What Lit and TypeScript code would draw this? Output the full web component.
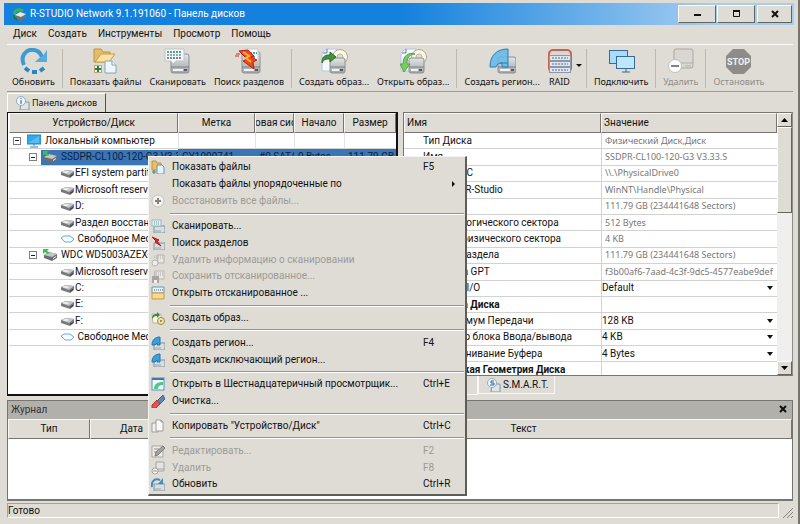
import { LitElement, html, css, svg, nothing } from "lit";
import { customElement } from "lit/decorators.js";
import { classMap } from "lit/directives/class-map.js";

const drive = (x: number, y: number, w: number, h: number) => svg`
  <rect x=${x} y=${y} width=${w} height=${h} rx="2" fill="url(#metal)" stroke="#8d9194"/>
  <path d="M${x} ${y + h - 6}h${w}" stroke="#7d8184"/>
  <path d="M${x + 2} ${y + h - 3}h${w - 8}" stroke="#f2f2f2" stroke-width="2"/>
  <path d="M${x + w - 5} ${y + h - 3}h3" stroke="#55595c" stroke-width="2"/>`;

const metal = svg`<defs><linearGradient id="metal" x1="0" y1="0" x2="0" y2="1">
  <stop offset="0" stop-color="#e3e5e6"/><stop offset="1" stop-color="#a2a6a9"/></linearGradient></defs>`;

const dots = (x: number, y: number) => svg`
  <path d="M${x} ${y}h15" stroke="#4aa69a" stroke-width="2" stroke-dasharray="2 1"/>
  <path d="M${x} ${y + 3}h15" stroke="#44525c" stroke-width="1" stroke-dasharray="2 1"/>
  <path d="M${x} ${y + 6}h15" stroke="#7b8791" stroke-width="2" stroke-dasharray="2 1"/>`;

const page = svg`<path d="M1 5l4-4h11v22h-15z" fill="#f6f9ff" stroke="#b5c4e4"/><path d="M2 5h4v-4" fill="#e5ecfb" stroke="#5e7fbe"/>`;
const disc = svg`<circle cx="19" cy="9" r="7.500" fill="#faf6e8" stroke="#b5a988"/><circle cx="19" cy="9" r="3" fill="#e0ddd8" stroke="#c2b795"/>`;

const big: Record<string, unknown> = {
  refresh: svg`<path d="M4 17C-1 6 9-1 17 3c3 1 4 4 5 6" fill="none" stroke="#3d9bd2" stroke-width="4"/>
    <path d="M27 2v12H15l4-4 3-1z" fill="#57acdd"/>
    <path d="M5 20l4 3M12 24h5M20 23l4-3" stroke="#2289c6" stroke-width="4"/>`,
  files: svg`<path d="M2 1h7l2 3h7v3l-6 7H2z" fill="#e5bd68" stroke="#c0953f"/><path d="M3 14l6-8h14l-6 8z" fill="#fbe2a4" stroke="#c79d4b"/>
    <path d="M13 13h7l4 4v8H13z" fill="#eef7fd" stroke="#7fa7c2"/><path d="M20 13v4h4" fill="#fff" stroke="#7fa7c2"/>
    <rect x="2.500" y="17.500" width="7" height="7" fill="#f4f4ea" stroke="#b4a77e"/><path d="M6 18v6M3 21h6" stroke="#2e7d42" stroke-width="2"/>`,
  scan: svg`${metal}${drive(7, 6, 18, 19)}<path d="M1 1h19v12h-8l-3 3-2-3H1z" fill="#f3f7f8" stroke="#b9c4c9"/>${dots(3, 4)}`,
  search: svg`${metal}${drive(7, 4, 18, 21)}<path d="M8 1h15v12H10z" fill="#fff" stroke="#c3cace"/><path d="M15 5h7M15 9h6" stroke="#4aa69a" stroke-width="2" stroke-dasharray="2 1"/>
    <path d="M4 3l9-1 6 6-3 1 6 3-4 2 1 7-11-8 4-2z" fill="#f04a1c" stroke="#b21c1c"/><path d="M8 4l6 4-3 2 5 4" fill="none" stroke="#ffb52e" stroke-width="2"/><path d="M1 6h4M0 8h4" stroke="#cf2d24"/>`,
  create: svg`${metal}${page}${disc}${drive(9, 10, 15, 15)}<path d="M1 15c0-7 3-8 8-8V4l6 5-6 5v-3c-4 0-6 0-8 4z" fill="#43913c" stroke="#2b6d27"/>`,
  open: svg`${metal}${page}${disc}${drive(9, 10, 15, 15)}<path d="M15 6C9 6 7 10 7 16h3l-6 8-4-8h3C3 8 8 4 15 6z" fill="#7bcb62" stroke="#4ca93f"/>`,
  region: svg`${metal}${drive(9, 9, 18, 16)}<path d="M1 19C1 7 8 1 19 1v18h-6v-4c-3 0-5 1-6 4z" fill="#62b9e9" fill-opacity=".85" stroke="#277fb7"/><path d="M11 15h8" stroke="#277fb7"/>`,
  raid: svg`<rect x="3" y="2" width="22" height="22" rx="4" fill="#d4d8dd" stroke="#c3644c" stroke-width="2"/>
    <g fill="#dfe5ec" stroke="#8b98aa"><rect x="3.500" y="7.500" width="21" height="5"/><rect x="3.500" y="13.500" width="21" height="5"/><rect x="3.500" y="19.500" width="21" height="5"/></g>
    <path d="M6 10h16M6 16h16M6 22h16" stroke="#5a6c86" stroke-dasharray="2 1"/>`,
  connect: svg`<g stroke="#3a6a94" fill="#a8ddf7"><rect x="1.500" y="2.500" width="18" height="13"/><path d="M8 18h5M10 16v2"/><rect x="8.500" y="8.500" width="18" height="12" fill="#bde8fb"/><path d="M14 24h8M18 21v3"/></g>`,
  remove: svg`<rect x="7" y="1" width="19" height="19" rx="2" fill="#dad7d2" stroke="#aaa7a2"/><path d="M7 15h19M18 18h6" stroke="#b3b0ab"/>
    <circle cx="8" cy="18" r="6.500" fill="#fdfdfd" stroke="#c3c0bb"/><path d="M4 18h8" stroke="#858280" stroke-width="2"/>`,
  stop: svg`<path d="M8 1h11l7 7v11l-7 7H8l-7-7V8z" fill="#8d8c89"/><text x="13.500" y="17" text-anchor="middle" font-family="Roboto, sans-serif" font-size="9" font-weight="700" fill="#f3f2f0">STOP</text>`,
};

const miniDrive = svg`<path d="M3 7h11v7H3z" fill="#d9dde0" stroke="#7f93a1"/><path d="M4 12h6" stroke="#93a5b1"/>`;
const miniScan = svg`<rect x="1" y="1" width="9" height="6" fill="#e9f4f5" stroke="#9fb7bd"/><path d="M3 3h6M3 5h6" stroke="#59949a" stroke-dasharray="1 1"/>`;
const quarter = svg`<path d="M1 9C1 4 4 1 9 1v8H6V7L4 9z" fill="#3c9fd9" stroke="#1f77ad"/>`;

const small: Record<string, unknown> = {
  files: svg`<path d="M1 1h4l1 2h4v7H1z" fill="#eabf62" stroke="#bd923e"/><path d="M6 5h5l2 2v7H6z" fill="#e4f3fb" stroke="#6496b5"/><path d="M3 10v4M1 12h4" stroke="#3d8e4c"/>`,
  restore: svg`<circle cx="7" cy="7" r="6" fill="#f2f1ee" stroke="#c4c2bd"/><path d="M7 4v6M4 7h6" stroke="#83817d" stroke-width="2"/>`,
  scan: svg`${miniDrive}${miniScan}`,
  search: svg`${miniDrive}<path d="M1 1l7 3-2 1 4 5-6-4 1-1z" fill="#e0302c" stroke="#b51820"/>`,
  deleteScan: svg`<g opacity=".5"><path d="M6 2h7v8H7z" fill="#f1f0ee" stroke="#8f8d89"/><path d="M3 3h9M3 5h9" stroke="#8f8d89" stroke-dasharray="1 1"/><circle cx="4" cy="10" r="3" fill="#fff" stroke="#8f8d89"/></g>`,
  saveScan: svg`<g opacity=".6"><path d="M4 2h9v8H4z" fill="#f1f0ee" stroke="#a19f9b"/><path d="M3 4h9M3 6h9" stroke="#8f8d89" stroke-dasharray="1 1"/><path d="M1 7h7v7H1z" fill="#85837f"/><path d="M3 11h3v3H3z" fill="#fff"/></g>`,
  openScan: svg`<path d="M1 1h12v6H1z" fill="#e8f2fa" stroke="#6c94b4"/><path d="M3 4h9" stroke="#44678b" stroke-dasharray="1 1"/><path d="M1 7h12v6H1z" fill="#fbda85" stroke="#c49b43"/>`,
  image: svg`<path d="M1 3h9v9H2z" fill="#f7f7ef" stroke="#b8b79d"/><circle cx="10" cy="10" r="3.500" fill="#f0e8a8" stroke="#8f8f46"/><circle cx="10" cy="10" r="1" fill="#77773a"/><path d="M1 8c0-4 2-5 5-5V1l3 3-3 3V5C3 5 3 6 1 8z" fill="#3a8a37"/>`,
  region: svg`${miniDrive}${quarter}`,
  hex: svg`<rect x="1" y="1" width="12" height="12" fill="#eef7fb" stroke="#5d92bd"/><path d="M1 2h12" stroke="#3b7bb2" stroke-width="2"/><path d="M3 12c0-5 3-7 9-7v3c-3 0-5 1-5 4z" fill="#4fc68a"/>`,
  eraser: svg`<path d="M6 7l6-6 2 4-6 6z" fill="#5c86b4" stroke="#3d6390"/><path d="M1 11l5-5 3 4-4 4H1z" fill="#e25651" stroke="#a93638"/>`,
  copy: svg`<path d="M1 4h6v9H1z" fill="#f2f1ee" stroke="#9f9d98"/><path d="M5 1h5l2 2v9H5z" fill="#fafaf8" stroke="#9f9d98"/><path d="M10 1v2h2" fill="none" stroke="#9f9d98"/>`,
  edit: svg`<path d="M1 2h11v11H1z" fill="#edecea" stroke="#a9a7a3"/><path d="M3 5h5M3 8h4" stroke="#8e8c88"/><path d="M4 12l1-4 7-6 2 2-7 7z" fill="#a5a39f" stroke="#807e7a"/>`,
  remove: svg`<path d="M5 1h8v9H5z" fill="#e6e4e0" stroke="#a6a4a0"/><path d="M6 8h7" stroke="#a6a4a0"/><circle cx="4" cy="10" r="3" fill="#fff" stroke="#aaa8a4"/><path d="M2 10h4" stroke="#8f8d89"/>`,
  refresh: svg`${miniDrive}<path d="M1 10C0 4 4 1 9 3" fill="none" stroke="#3e8bc6" stroke-width="2"/><path d="M12 1v6H7z" fill="#3e8bc6"/>`,
  info: svg`<path d="M5 6h8v8H4z" fill="#dfe4e7" stroke="#8296a4"/><circle cx="5" cy="5" r="4.500" fill="#f0f8fe" stroke="#93aabc"/><path d="M5 2v1M5 4v4" stroke="#255f98" stroke-width="1"/>`,
  smart: svg`<path d="M5 6h8v8H4z" fill="#dfe4e7" stroke="#8296a4"/><circle cx="5" cy="5" r="4.500" fill="#f0f8fe" stroke="#93aabc"/><path d="M7 3H4v2h3v2H3" fill="none" stroke="#255f98"/>`,
  computer: svg`<rect x="0" y="1" width="14" height="9" fill="#31a8ea" stroke="#1b86c6"/><path d="M1 9L12 2v7z" fill="#58bdf2"/><path d="M7 10v2M3 13h8" stroke="#2b7fb4"/>`,
  part: svg`<path d="M1 6l5-2 8 1v4l-4 3-9-3z" fill="#77797b"/><path d="M1 6l5-2 8 1-5 4z" fill="#c3c5c7"/><path d="M10 10l3-2v1l-3 2z" fill="#2f3133"/><ellipse cx="6" cy="6" rx="3" ry="1" fill="#eceded"/>`,
  disk: svg`<path d="M1 7l5-3 8 2v4l-5 3-8-3z" fill="#6c6e70"/><path d="M1 7l5-3 8 2-5 3z" fill="#c3c5c7"/><path d="M10 10l3-2v1l-3 2z" fill="#eee"/><path d="M0 1h6L4 3l3 2-3 1-2-2-2 2z" fill="#35c54a"/>`,
  free: svg`<path d="M1 6l3-2h6l4 3-3 3H5z" fill="#f5fbff" stroke="#6da9d8"/>`,
};

const toolbar: ({ i: string; t: string; off?: boolean; drop?: boolean } | null)[] = [
  { i: "refresh", t: "Обновить" }, null,
  { i: "files", t: "Показать файлы" }, { i: "scan", t: "Сканировать" }, { i: "search", t: "Поиск разделов" }, null,
  { i: "create", t: "Создать образ..." }, { i: "open", t: "Открыть образ..." }, null,
  { i: "region", t: "Создать регион..." }, { i: "raid", t: "RAID", drop: true }, null,
  { i: "connect", t: "Подключить" }, null,
  { i: "remove", t: "Удалить", off: true }, null,
  { i: "stop", t: "Остановить", off: true },
];

const tree: { l: number; i: string; t: string; exp?: boolean; sel?: boolean; c?: string[] }[] = [
  { l: 0, i: "computer", t: "Локальный компьютер", exp: true },
  { l: 1, i: "disk", t: "SSDPR-CL100-120-G3 V3.33.S", exp: true, sel: true, c: ["GY1000741", "#0 SATA", "0 Bytes", "111.79 GB"] },
  { l: 2, i: "part", t: "EFI system partition" },
  { l: 2, i: "part", t: "Microsoft reserved partition" },
  { l: 2, i: "part", t: "D:" },
  { l: 2, i: "part", t: "Раздел восстановления" },
  { l: 2, i: "free", t: " Свободное Место" },
  { l: 1, i: "disk", t: "WDC WD5003AZEX-00K1GA0", exp: true },
  { l: 2, i: "part", t: "Microsoft reserved partition" },
  { l: 2, i: "part", t: "C:" },
  { l: 2, i: "part", t: "E:" },
  { l: 2, i: "part", t: "F:" },
  { l: 2, i: "free", t: " Свободное Место" },
];

const props: { n: string; v?: string; k?: "head" | "sub"; edit?: boolean }[] = [
  { n: "Тип Диска", v: "Физический Диск,Диск" },
  { n: "Имя", v: "SSDPR-CL100-120-G3 V3.33.S" },
  { n: "Объект ОС", v: "\\\\.\\PhysicalDrive0" },
  { n: "Имя для R-Studio", v: "WinNT\\Handle\\Physical" },
  { n: "Размер", v: "111.79 GB (234441648 Sectors)" },
  { n: "Размер логического сектора", v: "512 Bytes" },
  { n: "Размер физического сектора", v: "4 KB" },
  { n: "Размер раздела", v: "111.79 GB (234441648 Sectors)" },
  { n: "Разметка GPT", v: "f3b00af6-7aad-4c3f-9dc5-4577eabe9def" },
  { n: "Драйвер I/O", v: "Default", edit: true },
  { n: "Свойства Диска", k: "head" },
  { n: "Максимум Передачи", v: "128 KB", k: "sub", edit: true },
  { n: "Размер блока Ввода/вывода", v: "4 KB", k: "sub", edit: true },
  { n: "Выравнивание Буфера", v: "4 Bytes", k: "sub", edit: true },
  { n: "Физическая Геометрия Диска", k: "head" },
];

const menu: ({ i?: string; t: string; k?: string; off?: boolean; more?: boolean } | null)[] = [
  { i: "files", t: "Показать файлы", k: "F5" },
  { t: "Показать файлы упорядоченные по", more: true },
  { i: "restore", t: "Восстановить все файлы...", off: true }, null,
  { i: "scan", t: "Сканировать..." },
  { i: "search", t: "Поиск разделов" },
  { i: "deleteScan", t: "Удалить информацию о сканировании", off: true },
  { i: "saveScan", t: "Сохранить отсканированное...", off: true },
  { i: "openScan", t: "Открыть отсканированное ..." }, null,
  { i: "image", t: "Создать образ..." }, null,
  { i: "region", t: "Создать регион...", k: "F4" },
  { i: "region", t: "Создать исключающий регион..." }, null,
  { i: "hex", t: "Открыть в Шестнадцатеричный просмотрщик...", k: "Ctrl+E" },
  { i: "eraser", t: "Очистка..." }, null,
  { i: "copy", t: "Копировать \"Устройство/Диск\"", k: "Ctrl+C" }, null,
  { i: "edit", t: "Редактировать...", k: "F2", off: true },
  { i: "remove", t: "Удалить", k: "F8", off: true },
  { i: "refresh", t: "Обновить", k: "Ctrl+R" },
];

const icon = (name?: string) =>
  html`<svg class="ico" viewBox="0 0 14 14" aria-hidden="true">${name ? small[name] : nothing}</svg>`;

@customElement("app-root")
export class AppRoot extends LitElement {
  static styles = css`
    :host { display: block; position: relative; font: 10px/14px Roboto, "Noto Sans", sans-serif; color: #111; }
    * { box-sizing: border-box; }
    button, select { font: inherit; color: inherit; margin: 0; padding: 0; border: 0; background: none; border-radius: 0; white-space: nowrap; }
    .ico { width: 14px; height: 14px; flex: none; display: block; }
    .win { min-height: 100vh; display: flex; flex-direction: column; background: #dfdcd6; padding: 3px 4px 6px;
      border: 1px solid #eceae7; border-right: 2px solid #77756f; border-bottom: 2px solid #77756f; border-left-width: 0; border-top-width: 0; }
    .title { display: flex; align-items: center; height: 22px; padding: 0 2px 0 8px; color: #fff; gap: 4px;
      background: linear-gradient(90deg, #1381dd 50%, #a4cdf1 90%); }
    .title svg { width: 14px; height: 14px; }
    .title h1 { font: inherit; margin: 0; flex: 1; }
    .caps { display: flex; gap: 1px; }
    .caps button { width: 38px; height: 18px; background: #dfdcd6; display: grid; place-items: center; }
    .raised { border: 1px solid; border-color: #fff #66645f #66645f #fff; }
    .caps button:last-child { margin-left: 1px; width: 35px; }
    .menubar { display: flex; height: 18px; align-items: center; padding-left: 9px; gap: 11px; }
    .body { padding: 0 1px 0 3px; display: flex; flex-direction: column; flex: 1; }
    .toolbar { display: flex; height: 48px; border-top: 1px solid #fafaf8; border-bottom: 1px solid #9b9993; font-family: "Noto Sans", sans-serif; font-size: 9px; margin-top: 1px; padding-left: 1px; }
    .tool { display: flex; flex-direction: column; align-items: center; padding: 3px 4px 0; position: relative; flex: none; }
    .tool svg { width: 27px; height: 27px; display: block; }
    .tool.drop { margin-right: 6px; padding-left: 2px; }
    .tool.drop::after { content: ""; position: absolute; right: -5px; top: 19px; border: 3px solid transparent; border-top-color: #111; border-bottom: 0; }
    .off { color: #8f8d89; }
    .vsep { width: 1px; background: #bab8b3; margin: 4px 3px 3px; flex: none; }
    .tabs { display: flex; height: 20px; align-items: flex-end; }
    .tab { display: flex; align-items: center; gap: 2px; height: 19px; padding: 0 8px; border: 1px solid #fff; border-right: 1px solid #55534f; border-bottom: 0; font-family: "Noto Sans", sans-serif; font-size: 9px; }
    .main { display: grid; grid-template-columns: 391fr 390fr; gap: 5px; height: 284px; }
    .tree { border: 2px solid #111; border-top-width: 1px; border-left-width: 1px; background: #fff; overflow: hidden; padding-left: 1px; }
    table { border-collapse: separate; border-spacing: 0; width: 100%; table-layout: fixed; }
    th { font-weight: 400; height: 20px; padding: 0; background: #dfdcd6; border: 1px solid; border-color: #f8f7f5 #77756f #77756f #f8f7f5; }
    th div { display: flex; justify-content: center; overflow: hidden; white-space: nowrap; }
    .start div { justify-content: flex-start; padding-left: 2px; }
    td { padding: 0; border-bottom: 1px solid #d2d2d2; white-space: nowrap; overflow: hidden; }
    .treetable { height: 233px; }
    .c1 { width: 169px; } .c2 { width: 77px; } .c3 { width: 39px; } .c4 { width: 50px; }
    .treetable td + td { border-left: 1px solid #e2e2e2; padding-left: 3px; }
    .cell { display: flex; align-items: center; height: 15px; }
    .l0 { padding-left: 4px; } .l1 { padding-left: 20px; } .l2 { padding-left: 49px; }
    .box { width: 8px; height: 8px; border: 1px solid #808080; margin-right: 4px; flex: none; display: grid; place-items: center; }
    .box::before { content: ""; width: 4px; height: 1px; background: #222; }
    .lab { display: flex; align-items: center; flex: 1; gap: 4px; padding-left: 2px; white-space: pre; height: 100%; }
    .l2 .lab { gap: 1px; }
    .sel .lab, .sel td + td { background: #3a75b5; color: #0d1f3c; border-color: #3a75b5; }
    .right { display: flex; flex-direction: column; }
    .props { display: flex; border: 1px solid #77756f; border-right-color: #8f8d87; background: #fff; height: 264px; overflow: hidden; }
    .grid { flex: 1; overflow: hidden; }
    .proptable { height: 266px; }
    .p1 { width: 197px; }
    .proptable td { padding-left: 19px; }
    .proptable td + td { padding-left: 3px; color: #777; border-left: 1px solid #d2d2d2; font-family: "Noto Sans", sans-serif; font-size: 9px; }
    .proptable .head td { font-weight: 700; }
    .proptable .sub td:first-child { padding-left: 31px; }
    .proptable td.edit { padding-left: 0; color: #111; font-family: inherit; font-size: 10px; }
    .combo { display: flex; align-items: center; position: relative; }
    .combo select { appearance: none; width: 100%; height: 14px; }
    .combo::after { content: ""; position: absolute; right: 4px; border: 3px solid transparent; border-top: 4px solid #111; border-bottom: 0; pointer-events: none; }
    .scroll { width: 15px; display: flex; flex-direction: column; background: #f1efed; }
    .arrow { height: 14px; background: #dfdcd6; display: grid; place-items: center; }
    .thumb { height: 86px; background: #dfdcd6; }
    .space { flex: 1; }
    .subtabs { display: flex; padding-left: 1px; }
    .subtabs .tab { border: 1px solid #f8f7f5; border-top: 0; padding: 0 8px; width: 74px; }
    .subtabs .tab + .tab { width: 77px; height: 18px; font-size: 10px; font-family: inherit; }
    .log { margin-top: 4px; border: 1px solid #77756f; background: #fff; min-height: 101px; flex: 1; margin-bottom: 2px; border-bottom-width: 2px; }
    .loghead { display: flex; align-items: center; justify-content: space-between; height: 18px; background: #b1b0ab; padding: 0 5px 0 3px; }
    .loghead h2 { margin: 0; font: inherit; color: #333; }
    .g1 { width: 82px; } .g2 { width: 83px; } .g3 { width: 82px; }
    .status { display: flex; height: 15px; align-items: flex-end; gap: 4px; }
    .status p { margin: 0; flex: 1; height: 15px; border: 1px solid; border-color: #a5a39e #fff #fff #a5a39e; line-height: 13px; }
    .status svg { width: 10px; height: 10px; }
    .menu { position: absolute; left: 148px; top: 156px; width: 319px; height: 340px; display: flex; flex-direction: column; background: #dfdcd6;
      border: 1px solid; border-color: #f4f3f1 #5f5d58 #5f5d58 #f4f3f1; border-right-width: 2px; border-bottom-width: 2px; padding: 2px 1px 1px 2px; }
    .item { display: grid; grid-template-columns: 14px 1fr 41px; column-gap: 7px; align-items: center; text-align: left; flex: 17 1 0; min-height: 0; position: relative; }
    .item.off { color: #9d9b97; }
    .menu hr { margin: 0 0 0 19px; border: 0; flex: 8 1 0; background: linear-gradient(#96948f, #96948f) 0 3px / 100% 1px no-repeat, linear-gradient(#fff, #fff) 0 4px / 100% 1px no-repeat; }
    .more { position: absolute; right: 9px; top: 5px; border: 3px solid transparent; border-left: 3px solid #111; border-right: 0; }
  `;

  render() {
    return html`
      <div class="win">
        <header class="title">
          <svg viewBox="0 0 14 14"><path d="M1 7c0-5 6-8 11-4l-2 2C6 3 4 5 4 8z" fill="#35b54a"/><path d="M3 8l5-3 6 2v3l-5 4-6-3z" fill="#6d7377"/><path d="M3 8l5-3 6 2-5 3z" fill="#e4e7e8"/><path d="M1 7l4 5 1 2-4-2z" fill="#167c2c"/></svg>
          <h1>R-STUDIO Network 9.1.191060 - Панель дисков</h1>
          <div class="caps">
            <button class="raised" aria-label="Свернуть"><svg viewBox="0 0 14 14"><path d="M4 8h7" stroke="#111" stroke-width="2"/></svg></button>
            <button class="raised" aria-label="Развернуть"><svg viewBox="0 0 14 14"><path d="M4.500 4.500h6v5h-6z" fill="none" stroke="#111"/><path d="M4 4h7" stroke="#111" stroke-width="2"/></svg></button>
            <button class="raised" aria-label="Закрыть"><svg viewBox="0 0 14 14"><path d="M4 4l6 6M10 4l-6 6" stroke="#111" stroke-width="2"/></svg></button>
          </div>
        </header>
        <nav class="menubar">${["Диск", "Создать", "Инструменты", "Просмотр", "Помощь"].map((m) => html`<button>${m}</button>`)}</nav>
        <div class="body">
          <div class="toolbar">
            ${toolbar.map((t) => t
              ? html`<button class=${classMap({ tool: true, off: !!t.off, drop: !!t.drop })} ?disabled=${t.off}>
                  <svg viewBox="0 0 27 27" aria-hidden="true">${big[t.i]}</svg>${t.t}</button>`
              : html`<span class="vsep"></span>`)}
          </div>
          <div class="tabs"><button class="tab">${icon("info")}Панель дисков</button></div>
          <div class="main">
            <section class="tree">
              <table class="treetable">
                <thead><tr><th class="c1"><div>Устройство/Диск</div></th><th class="c2"><div>Метка</div></th><th class="c3"><div>Файловая система</div></th><th class="c4"><div>Начало</div></th><th><div>Размер</div></th></tr></thead>
                <tbody>${tree.map((r) => html`<tr class=${r.sel ? "sel" : ""}>
                  <td><div class="cell l${r.l}">${r.exp ? html`<span class="box"></span>` : nothing}<span class="lab">${icon(r.i)}<span>${r.t}</span></span></div></td>
                  ${[0, 1, 2, 3].map((n) => html`<td>${r.c?.[n]}</td>`)}</tr>`)}</tbody>
              </table>
            </section>
            <section class="right">
              <div class="props">
                <div class="grid">
                  <table class="proptable">
                    <thead><tr><th class="p1 start"><div>Имя</div></th><th class="start"><div>Значение</div></th></tr></thead>
                    <tbody>${props.map((p) => html`<tr class=${p.k ?? ""}><td>${p.n}</td>${p.edit
                      ? html`<td class="edit"><div class="combo"><select aria-label=${p.n}><option>${p.v}</option></select></div></td>`
                      : html`<td>${p.v}</td>`}</tr>`)}</tbody>
                  </table>
                </div>
                <div class="scroll">
                  <button class="arrow raised" aria-label="Вверх"><svg width="7" height="4" viewBox="0 0 7 4"><path d="M0 4l3.500-4L7 4z"/></svg></button>
                  <div class="thumb raised"></div><div class="space"></div>
                  <button class="arrow raised" aria-label="Вниз"><svg width="7" height="4" viewBox="0 0 7 4"><path d="M0 0l3.500 4L7 0z"/></svg></button>
                </div>
              </div>
              <div class="subtabs"><button class="tab">Свойства</button><button class="tab">${icon("smart")}S.M.A.R.T.</button></div>
            </section>
          </div>
          <section class="log">
            <div class="loghead"><h2>Журнал</h2><button aria-label="Закрыть журнал"><svg width="8" height="8" viewBox="0 0 8 8"><path d="M1 1l6 6M7 1L1 7" stroke="#111" stroke-width="2"/></svg></button></div>
            <table><thead><tr><th class="g1"><div>Тип</div></th><th class="g2"><div>Дата</div></th><th class="g3"><div>Время</div></th><th><div>Текст</div></th></tr></thead></table>
          </section>
          <footer class="status"><p>Готово</p><svg viewBox="0 0 10 10"><path d="M0 10L10 0M4 10l6-6M8 10l2-2" stroke="#85837f"/></svg></footer>
        </div>
        <div class="menu" role="menu">
          ${menu.map((m) => m
            ? html`<button role="menuitem" class=${classMap({ item: true, off: !!m.off })} ?disabled=${m.off}>${icon(m.i)}<span>${m.t}</span><span>${m.k}</span>${m.more ? html`<i class="more"></i>` : nothing}</button>`
            : html`<hr>`)}
        </div>
      </div>`;
  }
}
